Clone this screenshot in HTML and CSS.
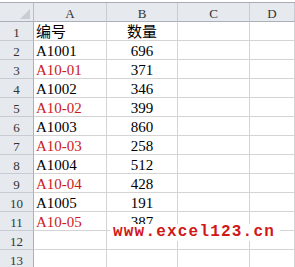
FILE: index.html
```html
<!DOCTYPE html>
<html lang="zh">
<head>
  <meta charset="UTF-8" />
  <title>编号 数量</title>
  <link rel="stylesheet" href="styles.css">
</head>
<body>

  <div class="sheet">
    <!-- cabecera de columnas -->
    <div class="cell corner"><span class="tri"></span></div>
    <div class="cell col-head">A</div>
    <div class="cell col-head">B</div>
    <div class="cell col-head">C</div>
    <div class="cell col-head">D</div>

    <div class="cell row-head">1</div>
    <div class="cell name">编号</div>
    <div class="cell num">数量</div>
    <div class="cell"></div>
    <div class="cell"></div>

    <div class="cell row-head">2</div>
    <div class="cell name">A1001</div>
    <div class="cell num">696</div>
    <div class="cell"></div>
    <div class="cell"></div>

    <div class="cell row-head">3</div>
    <div class="cell name red">A10-01</div>
    <div class="cell num">371</div>
    <div class="cell"></div>
    <div class="cell"></div>

    <div class="cell row-head">4</div>
    <div class="cell name">A1002</div>
    <div class="cell num">346</div>
    <div class="cell"></div>
    <div class="cell"></div>

    <div class="cell row-head">5</div>
    <div class="cell name red">A10-02</div>
    <div class="cell num">399</div>
    <div class="cell"></div>
    <div class="cell"></div>

    <div class="cell row-head">6</div>
    <div class="cell name">A1003</div>
    <div class="cell num">860</div>
    <div class="cell"></div>
    <div class="cell"></div>

    <div class="cell row-head">7</div>
    <div class="cell name red">A10-03</div>
    <div class="cell num">258</div>
    <div class="cell"></div>
    <div class="cell"></div>

    <div class="cell row-head">8</div>
    <div class="cell name">A1004</div>
    <div class="cell num">512</div>
    <div class="cell"></div>
    <div class="cell"></div>

    <div class="cell row-head">9</div>
    <div class="cell name red">A10-04</div>
    <div class="cell num">428</div>
    <div class="cell"></div>
    <div class="cell"></div>

    <div class="cell row-head">10</div>
    <div class="cell name">A1005</div>
    <div class="cell num">191</div>
    <div class="cell"></div>
    <div class="cell"></div>

    <div class="cell row-head">11</div>
    <div class="cell name red">A10-05</div>
    <div class="cell num">387</div>
    <div class="cell"></div>
    <div class="cell"></div>

    <div class="cell row-head">12</div>
    <div class="cell"></div>
    <div class="cell"></div>
    <div class="cell"></div>
    <div class="cell"></div>

    <div class="cell row-head">13</div>
    <div class="cell"></div>
    <div class="cell"></div>
    <div class="cell"></div>
    <div class="cell"></div>
  </div>

  <!-- marca de agua encima de la hoja -->
  <div class="watermark">www.excel123.cn</div>

</body>
</html>
```

FILE: styles.css
```css
body {
  margin: 0;
  background: #ffffff;
  font-family: 'Liberation Serif', 'Noto Sans CJK SC', serif;
  position: relative;
  overflow: hidden;
  height: 267px;
}

.sheet {
  display: grid;
  grid-template-columns: 34px 73px 71px 72px 1fr;
  grid-auto-rows: 19px;
  margin-top: 2px;
  border-top: 1px solid #a9adb3;
}

.cell {
  box-sizing: border-box;
  border-right: 1px solid #d4d4d4;
  border-bottom: 1px solid #d4d4d4;
  display: flex;
  align-items: flex-end;
  font-size: 15px;
  line-height: 16px;
  color: #000;
  white-space: nowrap;
}

.corner,
.col-head,
.row-head {
  background: #e6e9ed;
  color: #333;
  font-size: 13px;
  line-height: 12px;
  padding-bottom: 1px;
}

.corner {
  justify-content: flex-end;
  padding: 0 3px 2px 0;
  border-right-color: #b8bdc4;
  border-bottom-color: #a9b0b9;
}

.tri {
  width: 0;
  height: 0;
  border-left: 10px solid transparent;
  border-bottom: 10px solid #c9cdd2;
}

.col-head {
  justify-content: center;
  border-right-color: #c8ccd2;
  border-bottom-color: #a9b0b9;
}

.row-head {
  justify-content: center;
  border-right-color: #a9b0b9;
  border-bottom-color: #c8ccd2;
}

.name {
  padding-left: 2px;
}

.num {
  justify-content: center;
}

.red {
  color: #cc1a1a;
}

.watermark {
  position: absolute;
  left: 110px;
  top: 224px;
  width: 170px;
  height: 17px;
  padding-left: 3px;
  box-sizing: border-box;
  background: #ffffff;
  font-family: 'Liberation Mono', monospace;
  font-weight: bold;
  font-size: 16px;
  letter-spacing: 1.2px;
  line-height: 16px;
  color: #d01818;
}
```
